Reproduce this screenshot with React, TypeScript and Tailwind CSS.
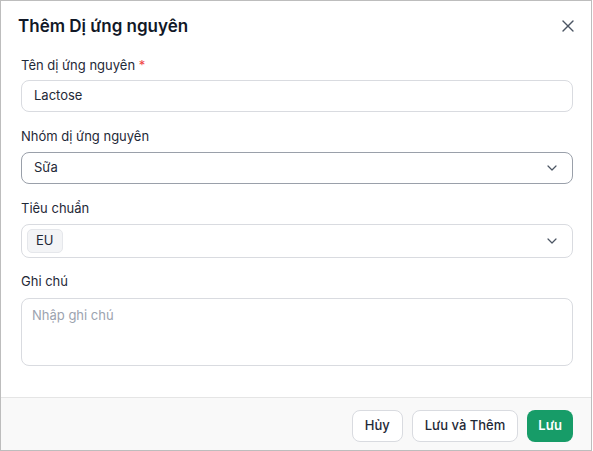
import { X, ChevronDown } from 'lucide-react'

export default function App() {
  return (
    <div
      className="w-[593px] h-[451px] bg-white"
      style={{ fontFamily: 'Inter, "Noto Sans", sans-serif' }}
    >
      <div className="w-[592px] h-[451px] border border-[#bdbdbd] flex flex-col text-[#1f2328]">
        {/* Header */}
        <div className="flex items-center justify-between pl-[17px] pr-[10px] pt-[12px] pb-[2px]">
          <h2 className="text-[17px] font-semibold text-[#111827] leading-6">Thêm Dị ứng nguyên</h2>
          <button className="text-[#4b5563] p-[3px]">
            <X size={20} strokeWidth={1.6} />
          </button>
        </div>

        {/* Body */}
        <div className="flex-1 px-5 pt-[14px] flex flex-col">
          <label className="text-[13px] text-[#1f2937] leading-5 mb-[5px]">
            Tên dị ứng nguyên <span className="text-[#ef4444]">*</span>
          </label>
          <div className="h-[32px] w-[552px] border border-[#d9dbe0] rounded-[8px] flex items-center px-3 text-[13px] text-[#1f2937]">
            Lactose
          </div>

          <label className="text-[13px] text-[#1f2937] leading-5 mt-[14px] mb-[6px]">Nhóm dị ứng nguyên</label>
          <div className="h-[32px] w-[552px] border border-[#9aa0aa] rounded-[8px] flex items-center justify-between px-3 text-[13px] text-[#1f2937]">
            <span>Sữa</span>
            <ChevronDown size={16} strokeWidth={1.8} className="text-[#4b5563]" />
          </div>

          <label className="text-[13px] text-[#1f2937] leading-5 mt-[14px] mb-[6px]">Tiêu chuẩn</label>
          <div className="h-[34px] w-[552px] border border-[#d9dbe0] rounded-[8px] flex items-center justify-between pl-[5px] pr-3 text-[13px] text-[#1f2937]">
            <span className="bg-[#f3f4f6] border border-[#e5e7eb] rounded-[5px] h-[24px] px-[8px] flex items-center">EU</span>
            <ChevronDown size={16} strokeWidth={1.8} className="text-[#4b5563]" />
          </div>

          <label className="text-[13px] text-[#1f2937] leading-5 mt-[13px] mb-[7px]">Ghi chú</label>
          <div className="h-[68px] w-[552px] border border-[#d9dbe0] rounded-[8px] px-[10px] py-[7px] text-[13px] text-[#9ca3af]">
            Nhập ghi chú
          </div>
        </div>

        {/* Footer */}
        <div className="h-[53px] bg-[#f9f9f9] border-t border-[#e5e5e5] flex items-start justify-end gap-[9px] pr-[18px] pt-[12px]">
          <button className="h-[32px] px-[12px] rounded-[8px] border border-[#d9dbe0] bg-white text-[13px] font-medium text-[#1f2937]">
            Hủy
          </button>
          <button className="h-[32px] px-[12px] rounded-[8px] border border-[#d9dbe0] bg-white text-[13px] font-medium text-[#1f2937]">
            Lưu và Thêm
          </button>
          <button className="h-[32px] px-[11px] rounded-[8px] bg-[#179c68] text-[13px] font-semibold text-white">
            Lưu
          </button>
        </div>
      </div>
    </div>
  )
}
